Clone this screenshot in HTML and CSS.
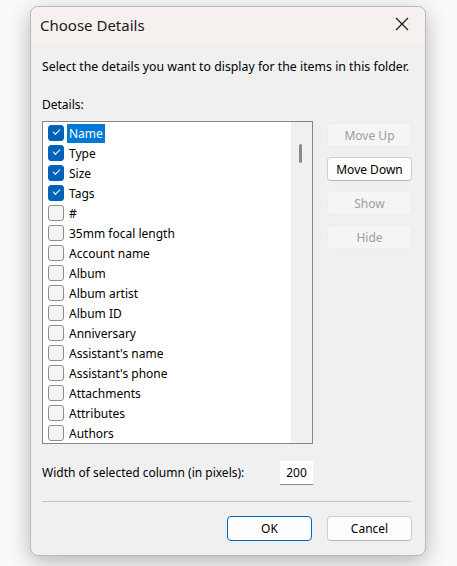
FILE: index.html
```html
<!DOCTYPE html>
<html>
<head>
<meta charset="utf-8">
<link rel="stylesheet" href="styles.css">
</head>
<body>
<div class="dialog">
  <div class="titlebar">
    <span class="title">Choose Details</span>
    <svg class="close" width="14" height="14" viewBox="0 0 14 14"><path d="M1 1L13 13M13 1L1 13" stroke="#1a1a1a" stroke-width="1.2" fill="none"/></svg>
  </div>
  <div class="content">
    <p class="intro">Select the details you want to display for the items in this folder.</p>
    <p class="label">Details:</p>
    <div class="main">
      <div class="listbox">
        <ul class="items">
          <li class="row"><span class="cb on"></span><span class="txt sel">Name</span></li>
          <li class="row"><span class="cb on"></span><span class="txt">Type</span></li>
          <li class="row"><span class="cb on"></span><span class="txt">Size</span></li>
          <li class="row"><span class="cb on"></span><span class="txt">Tags</span></li>
          <li class="row"><span class="cb"></span><span class="txt">#</span></li>
          <li class="row"><span class="cb"></span><span class="txt">35mm focal length</span></li>
          <li class="row"><span class="cb"></span><span class="txt">Account name</span></li>
          <li class="row"><span class="cb"></span><span class="txt">Album</span></li>
          <li class="row"><span class="cb"></span><span class="txt">Album artist</span></li>
          <li class="row"><span class="cb"></span><span class="txt">Album ID</span></li>
          <li class="row"><span class="cb"></span><span class="txt">Anniversary</span></li>
          <li class="row"><span class="cb"></span><span class="txt">Assistant's name</span></li>
          <li class="row"><span class="cb"></span><span class="txt">Assistant's phone</span></li>
          <li class="row"><span class="cb"></span><span class="txt">Attachments</span></li>
          <li class="row"><span class="cb"></span><span class="txt">Attributes</span></li>
          <li class="row"><span class="cb"></span><span class="txt">Authors</span></li>
        </ul>
        <div class="scrollbar"><div class="thumb"></div></div>
      </div>
      <div class="side">
        <button class="btn disabled">Move Up</button>
        <button class="btn">Move Down</button>
        <button class="btn disabled">Show</button>
        <button class="btn disabled">Hide</button>
      </div>
    </div>
    <div class="widthrow">
      <span>Width of selected column (in pixels):</span>
      <span class="input">200</span>
    </div>
    <div class="sep"></div>
    <div class="footer">
      <button class="btn primary">OK</button>
      <button class="btn">Cancel</button>
    </div>
  </div>
</div>
</body>
</html>
```
FILE: styles.css
```css
html, body {
  margin: 0;
  padding: 0;
}
body {
  background: #fafafa;
  font-family: "Segoe UI", "Noto Sans", sans-serif;
  font-size: 12px;
  color: #000;
  width: 457px;
  height: 566px;
  overflow: hidden;
}
.dialog {
  margin: 6px 0 0 30px;
  width: 396px;
  height: 550px;
  background: #f0f0f0;
  border: 1px solid #b9b9b9;
  border-radius: 8px;
  box-sizing: border-box;
  box-shadow: 0 6px 22px rgba(0,0,0,0.28);
  overflow: hidden;
  display: flex;
  flex-direction: column;
}
.titlebar {
  height: 36px;
  background: #f6f0ee;
  display: flex;
  align-items: center;
  justify-content: space-between;
  padding: 0 16px 0 9px;
  flex-shrink: 0;
}
.title {
  font-size: 15px;
  color: #1a1a1a;
}
.close {
  margin-top: -2px;
}
.content {
  padding: 0 13px 0 11px;
  display: flex;
  flex-direction: column;
}
.intro {
  margin: 15px 0 0 0;
  line-height: 17px;
  font-size: 12.3px;
}
.label {
  margin: 22px 0 0 0;
  line-height: 16px;
}
.main {
  display: flex;
  margin-top: 8px;
}
.listbox {
  width: 271px;
  height: 323px;
  box-sizing: border-box;
  border: 1px solid #828790;
  background: #fff;
  display: flex;
}
.items {
  list-style: none;
  margin: 0;
  padding: 1px 0 0 0;
  flex: 1;
}
.row {
  height: 20px;
  display: flex;
  align-items: center;
  padding-left: 5px;
}
.cb {
  width: 14px;
  height: 14px;
  border: 1px solid #8c8c8c;
  border-radius: 3px;
  background: #f4f4f4;
  margin-right: 3px;
  flex-shrink: 0;
  position: relative;
}
.cb.on {
  background: #0063b8;
  border-color: #0063b8;
}
.cb.on::after {
  content: "";
  position: absolute;
  left: 4px;
  top: 3px;
  width: 6px;
  height: 3px;
  border-left: 1px solid #fff;
  border-bottom: 1px solid #fff;
  transform: rotate(-45deg);
}
.txt {
  padding: 1px 2px 0 2px;
  line-height: 18px;
}
.txt.sel {
  background: #0078d7;
  color: #fff;
}
.scrollbar {
  width: 21px;
  background: #f0f0f0;
  position: relative;
}
.thumb {
  position: absolute;
  left: 8px;
  top: 22px;
  width: 3px;
  height: 19px;
  background: #8a8a8a;
  border-radius: 2px;
}
.side {
  display: flex;
  flex-direction: column;
  gap: 10px;
  margin-left: 14px;
  padding-top: 2px;
}
.btn {
  width: 85px;
  height: 24px;
  box-sizing: border-box;
  border: 1px solid #cfcfcf;
  border-bottom-color: #b8b8b8;
  border-radius: 4px;
  background: #fdfdfd;
  font-family: inherit;
  font-size: 12px;
  color: #000;
  padding: 0;
}
.btn.disabled {
  background: #f5f5f5;
  border-color: #ececec;
  color: #9d9d9d;
}
.btn.primary {
  border-color: #0067c0;
}
.widthrow {
  display: flex;
  align-items: center;
  justify-content: space-between;
  width: 271px;
  margin-top: 17px;
}
.widthrow span:first-child {
  margin-top: -1px;
}
.input {
  width: 33px;
  height: 24px;
  box-sizing: border-box;
  background: #fff;
  border-bottom: 1px solid #8a8a8a;
  text-align: center;
  line-height: 23px;
}
.sep {
  height: 1px;
  background: #c4c4c4;
  margin-top: 16px;
  width: 369px;
}
.footer {
  display: flex;
  justify-content: flex-end;
  gap: 15px;
  margin-top: 14px;
  width: 370px;
}
.footer .btn {
  height: 25px;
}
```
